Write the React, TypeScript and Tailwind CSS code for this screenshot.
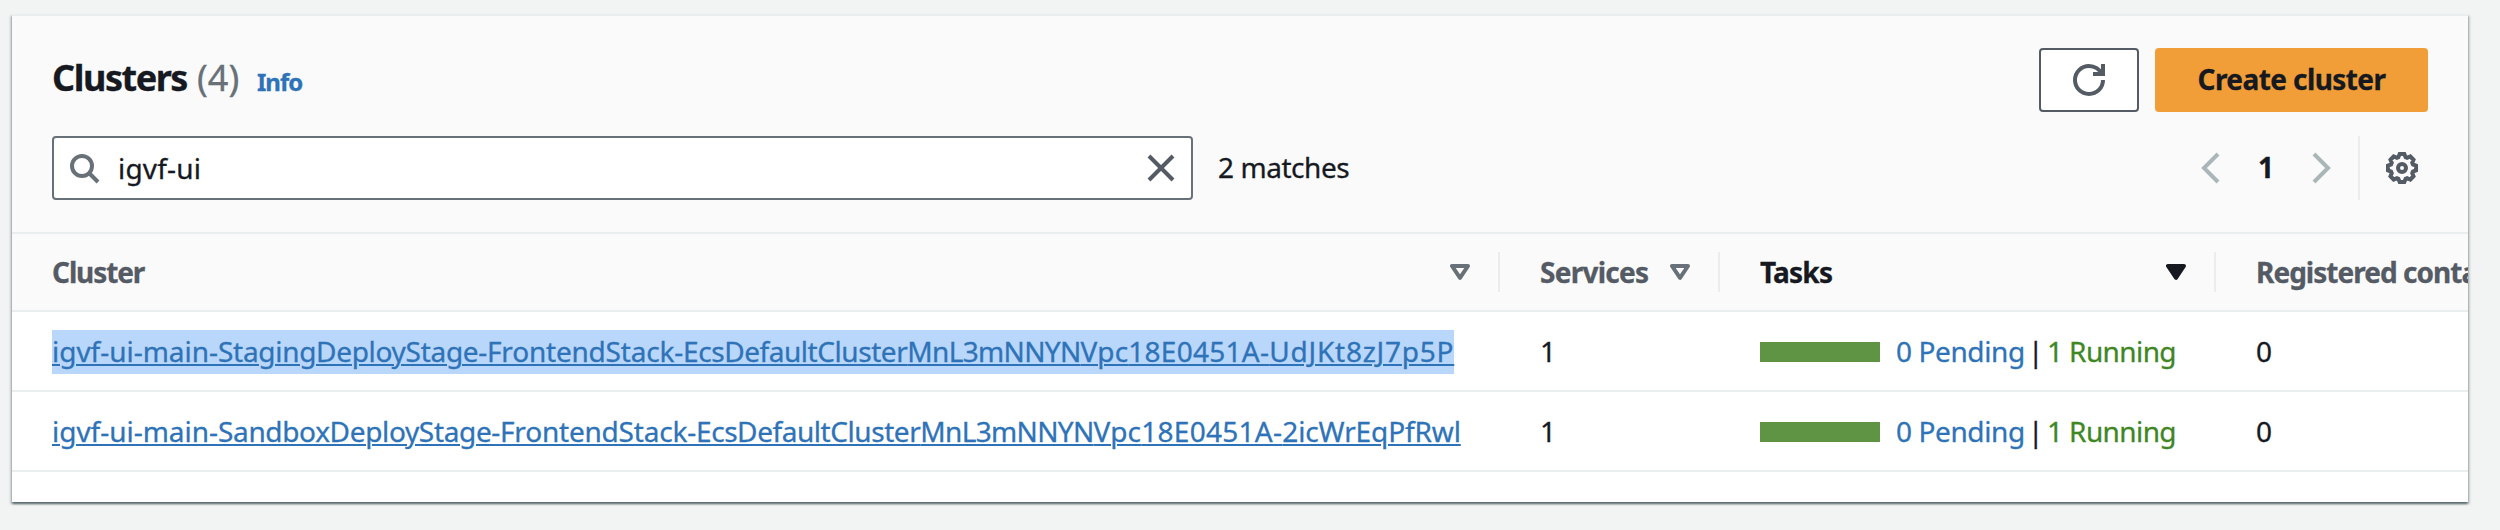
import type { ReactNode } from "react";

const gearOutline = Array.from({ length: 8 }, (_, i) => {
  const a = (i * Math.PI) / 4;
  const points = [
    [-3.6, -10.9],
    [-2.3, -14],
    [2.3, -14],
    [3.6, -10.9],
  ];
  return points
    .map(([x, y]) => {
      const px = 16 + x * Math.cos(a) - y * Math.sin(a);
      const py = 16 + x * Math.sin(a) + y * Math.cos(a);
      return `${px.toFixed(2)},${py.toFixed(2)}`;
    })
    .join(" ");
}).join(" ");

function Icon({ children, className = "" }: { children: ReactNode; className?: string }) {
  return (
    <svg viewBox="0 0 16 16" className={`h-8 w-8 shrink-0 fill-none stroke-current stroke-2 ${className}`}>
      {children}
    </svg>
  );
}

function SortIcon({ active = false }: { active?: boolean }) {
  return (
    <svg viewBox="0 0 20 16" className={`h-4 w-5 shrink-0 ${active ? "text-[#16191f]" : "text-[#687078]"}`}>
      <path
        d="M2 2h16l-8 11.8z"
        fill={active ? "currentColor" : "none"}
        stroke="currentColor"
        strokeWidth="4"
        strokeLinejoin="round"
      />
    </svg>
  );
}

function HeaderCell({
  label,
  active = false,
  sortable = true,
  className,
}: {
  label: string;
  active?: boolean;
  sortable?: boolean;
  className: string;
}) {
  return (
    <div
      className={`flex h-10 shrink-0 items-center justify-between border-[#eaeded] pl-10 font-bold ${
        active ? "text-[#16191f]" : "text-[#545b64]"
      } ${sortable ? "border-r-2 pr-7" : ""} ${className}`}
    >
      <span className="whitespace-nowrap">{label}</span>
      {sortable && <SortIcon active={active} />}
    </div>
  );
}

type NamePart = [text: string, tracking: string];

const clusters: { id: string; selected: boolean; parts: NamePart[] }[] = [
  {
    id: "staging",
    selected: true,
    parts: [
      ["igvf-ui-main-", "tracking-[-0.023px]"],
      ["StagingDeployStage-", "tracking-[-0.3px]"],
      ["FrontendStack-", "tracking-[-0.2px]"],
      ["EcsDefaultCluster", "tracking-[-0.437px]"],
      ["MnL3mNNYN", "tracking-[-0.673px]"],
      ["Vpc", "tracking-[0.173px]"],
      ["18E0451A-", "tracking-[0.27px]"],
      ["UdJKt8zJ7p5P", "tracking-[0.768px]"],
    ],
  },
  {
    id: "sandbox",
    selected: false,
    parts: [
      ["igvf-ui-main-", "tracking-[-0.023px]"],
      ["SandboxDeployStage-", "tracking-[-0.346px]"],
      ["FrontendStack-", "tracking-[-0.2px]"],
      ["EcsDefaultCluster", "tracking-[-0.437px]"],
      ["MnL3mNNYN", "tracking-[-0.673px]"],
      ["Vpc", "tracking-[0.173px]"],
      ["18E0451A-", "tracking-[0.27px]"],
      ["2icWrEqPfRwl", "tracking-[-0.126px]"],
    ],
  },
];

export default function App() {
  return (
    <div className="h-[530px] w-[2500px] overflow-hidden bg-[#f2f4f3] pt-3.5 pl-3 font-['Noto_Sans',sans-serif] text-[28px] leading-[42px] text-[#16191f] [-webkit-text-stroke:0.3px]">
      <div className="h-[488px] w-[2456px] border-t-2 border-[#eaeded] bg-white shadow-[0_2px_2px_0_rgba(0,28,36,0.5),2px_2px_2px_0_rgba(0,28,36,0.15),-2px_2px_2px_0_rgba(0,28,36,0.15)]">
        <div className="h-[218px] border-b-2 border-[#eaeded] bg-[#fafafa] px-10 pt-8">
          <div className="flex h-16 items-center justify-between">
            <div className="flex items-baseline">
              <h1 className="w-[145px] text-[36px] font-bold tracking-[-1.45px]">Clusters</h1>
              <span className="w-[60px] text-[36px] text-[#687078]">(4)</span>
              <a className="text-[24px] font-bold tracking-[-1px] text-[#2e73b8]">Info</a>
            </div>
            <div className="flex gap-4">
              <button className="flex h-16 w-[100px] items-center justify-center rounded-[4px] border-2 border-[#545b64] bg-white text-[#545b64]">
                <Icon>
                  <path d="M15 8c0 3.9-3.1 7-7 7s-7-3.1-7-7 3.1-7 7-7c2.8 0 5.3 1.7 6.4 4" />
                  <path d="M10 5h5V0" />
                </Icon>
              </button>
              <button className="h-16 w-[273px] rounded-[4px] bg-[#f19e38] pb-0.5 font-bold tracking-[-0.58px]">
                Create cluster
              </button>
            </div>
          </div>
          <div className="mt-6 flex h-16 items-center">
            <div className="flex h-16 w-[1141px] items-center rounded-[4px] border-2 border-[#687078] bg-white pr-3.5 pl-3.5">
              <Icon className="text-[#687078]">
                <circle cx="7" cy="7" r="5" />
                <path d="m15 15-4.5-4.5" />
              </Icon>
              <span className="ml-[18px] flex-1 tracking-[0.2px]">igvf-ui</span>
              <Icon className="text-[#545b64]">
                <path d="m2 2 12 12M14 2 2 14" />
              </Icon>
            </div>
            <span className="ml-[25px] pb-0.5 tracking-[-0.45px]">2 matches</span>
            <div className="ml-auto flex items-center">
              <Icon className="text-[#aab7b8]">
                <path d="M11 1 4 8l7 7" />
              </Icon>
              <span className="w-[76px] pb-0.5 text-center font-bold">1</span>
              <Icon className="text-[#aab7b8]">
                <path d="m5 1 7 7-7 7" />
              </Icon>
              <div className="ml-[22px] h-16 w-0.5 bg-[#eaeded]" />
              <svg viewBox="0 0 32 32" className="mr-2.5 ml-[26px] h-8 w-8 fill-none stroke-[#545b64] stroke-4">
                <polygon points={gearOutline} />
                <circle cx="16" cy="16" r="4" />
              </svg>
            </div>
          </div>
        </div>

        <div className="flex h-[78px] items-center overflow-hidden border-b-2 border-[#eaeded] bg-[#fafafa]">
          <HeaderCell label="Cluster" className="w-[1488px] tracking-[-1.1px]" />
          <HeaderCell label="Services" className="w-[220px] tracking-[-0.75px]" />
          <HeaderCell label="Tasks" active className="w-[496px] tracking-[-0.8px]" />
          <HeaderCell label="Registered container instances" sortable={false} className="w-[600px] tracking-[-0.97px]" />
        </div>

        {clusters.map((c) => (
          <div key={c.id} className="flex h-20 items-center border-b-2 border-[#eaeded]">
            <div className="flex w-[1488px] shrink-0 pt-0.5 pl-10">
              <a
                className={`pb-0.5 whitespace-nowrap text-[#2e73b8] underline decoration-2 underline-offset-2 ${
                  c.selected ? "bg-[#b9d6fb]" : ""
                }`}
              >
                {c.parts.map(([text, tracking]) => (
                  <span key={text} className={tracking}>
                    {text}
                  </span>
                ))}
              </a>
            </div>
            <div className="w-[220px] shrink-0 pl-10">1</div>
            <div className="flex w-[496px] shrink-0 items-center pl-10">
              <div className="mt-0.5 h-5 w-[120px] bg-[#5e9444]" />
              <span className="ml-4 w-[132px] tracking-[-0.4px] text-[#2e73b8]">0 Pending</span>
              <span className="w-[19px]">|</span>
              <span className="tracking-[-0.6px] text-[#3f8624]">1 Running</span>
            </div>
            <div className="pl-10">0</div>
          </div>
        ))}
      </div>
    </div>
  );
}
